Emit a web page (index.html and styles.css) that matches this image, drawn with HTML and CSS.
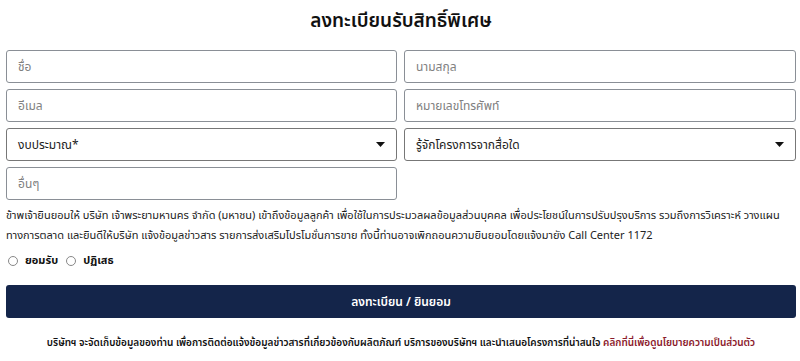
FILE: index.html
```html
<!DOCTYPE html>
<html lang="th">
<head>
<meta charset="utf-8">
<link rel="stylesheet" href="styles.css">
</head>
<body>
<div class="page">
  <h1 class="title">ลงทะเบียนรับสิทธิ์พิเศษ</h1>
  <form class="form">
    <div class="grid">
      <div class="field">ชื่อ</div>
      <div class="field">นามสกุล</div>
      <div class="field">อีเมล</div>
      <div class="field">หมายเลขโทรศัพท์</div>
      <div class="field select"><span>งบประมาณ*</span><svg class="caret" width="9" height="5" viewBox="0 0 9 5"><path d="M0 0h9L4.5 5z" fill="#111"/></svg></div>
      <div class="field select"><span>รู้จักโครงการจากสื่อใด</span><svg class="caret" width="9" height="5" viewBox="0 0 9 5"><path d="M0 0h9L4.5 5z" fill="#111"/></svg></div>
      <div class="field">อื่นๆ</div>
    </div>
    <p class="consent">ข้าพเจ้ายินยอมให้ บริษัท เจ้าพระยามหานคร จำกัด (มหาชน) เข้าถึงข้อมูลลูกค้า เพื่อใช้ในการประมวลผลข้อมูลส่วนบุคคล เพื่อประโยชน์ในการปรับปรุงบริการ รวมถึงการวิเคราะห์ วางแผนทางการตลาด และยินดีให้บริษัท แจ้งข้อมูลข่าวสาร รายการส่งเสริมโปรโมชั่นการขาย ทั้งนี้ท่านอาจเพิกถอนความยินยอมโดยแจ้งมายัง Call Center 1172</p>
    <div class="radios">
      <label class="radio"><span class="dot"></span>ยอมรับ</label>
      <label class="radio"><span class="dot"></span>ปฏิเสธ</label>
    </div>
    <div class="btn">ลงทะเบียน / ยินยอม</div>
    <p class="note">บริษัทฯ จะจัดเก็บข้อมูลของท่าน เพื่อการติดต่อแจ้งข้อมูลข่าวสารที่เกี่ยวข้องกับผลิตภัณฑ์ บริการของบริษัทฯ และนำเสนอโครงการที่น่าสนใจ <a class="link">คลิกที่นี่เพื่อดูนโยบายความเป็นส่วนตัว</a></p>
  </form>
</div>
</body>
</html>
```
FILE: styles.css
```css
* { box-sizing: border-box; }
body { margin: 0; background: #fff; font-family: "Noto Sans", "Noto Sans Thai", sans-serif; color: #111; }
.page { padding: 6px 4px 0 6px; }
.title { margin: 0 0 16px; text-align: center; font-size: 19px; font-weight: 600; line-height: 28px; }
.grid { display: grid; grid-template-columns: 391px 392px; column-gap: 7px; row-gap: 6px; }
.field { height: 33px; border: 1px solid #8a8f96; border-radius: 3px; padding: 0 11px; display: flex; align-items: center; font-size: 12px; color: #808080; }
.select { color: #222; justify-content: space-between; border-color: #777; }
.consent { margin: 5px 0 0; font-size: 11px; line-height: 20px; color: #222; }
.radios { display: flex; gap: 8px; margin-top: 7px; padding-left: 2px; font-size: 11px; font-weight: 700; }
.radio { display: flex; align-items: center; gap: 7px; }
.dot { width: 10px; height: 10px; border: 1px solid #888; border-radius: 50%; }
.btn { margin-top: 16px; height: 33px; background: #14254a; border-radius: 3px; color: #fff; display: flex; align-items: center; justify-content: center; font-size: 12px; font-weight: 600; }
.note { margin: 17px 0 0; text-align: center; font-size: 10px; font-weight: 600; color: #111; }
.link { color: #8b1a2b; }
```
